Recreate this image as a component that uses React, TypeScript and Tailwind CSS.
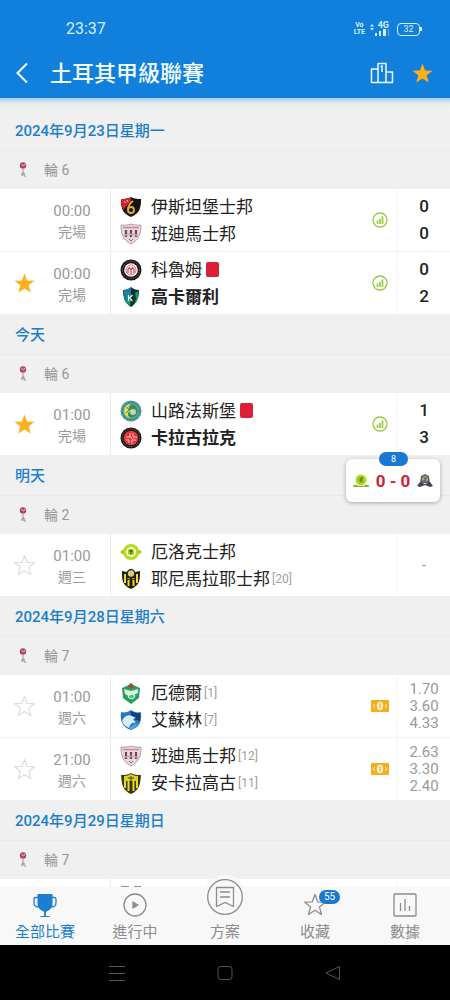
import React from 'react';

type CrestName =
  | 'istanbul'
  | 'bandirma'
  | 'umraniye'
  | 'kocaeli'
  | 'sanliurfa'
  | 'karagumruk'
  | 'erok'
  | 'malatya'
  | 'igdir'
  | 'erzurum'
  | 'ankaragucu'
  | 'next';

interface Team {
  name: string;
  crest: CrestName;
  rank?: number;
  redCard?: boolean;
  winner?: boolean;
}

interface Match {
  time: string;
  status: string;
  star: 'none' | 'on' | 'off';
  teams: Team[];
  icon?: 'chart' | 'cash';
  scores?: string[];
  odds?: string[];
}

interface Day {
  date: string;
  round: string;
  matches: Match[];
}

const days: Day[] = [
  {
    date: '2024年9月23日星期一',
    round: '輪 6',
    matches: [
      {
        time: '00:00',
        status: '完場',
        star: 'none',
        teams: [
          { name: '伊斯坦堡士邦', crest: 'istanbul' },
          { name: '班迪馬士邦', crest: 'bandirma' }
        ],
        icon: 'chart',
        scores: ['0', '0']
      },
      {
        time: '00:00',
        status: '完場',
        star: 'on',
        teams: [
          { name: '科魯姆', crest: 'umraniye', redCard: true },
          { name: '高卡爾利', crest: 'kocaeli', winner: true }
        ],
        icon: 'chart',
        scores: ['0', '2']
      }
    ]
  },
  {
    date: '今天',
    round: '輪 6',
    matches: [
      {
        time: '01:00',
        status: '完場',
        star: 'on',
        teams: [
          { name: '山路法斯堡', crest: 'sanliurfa', redCard: true },
          { name: '卡拉古拉克', crest: 'karagumruk', winner: true }
        ],
        icon: 'chart',
        scores: ['1', '3']
      }
    ]
  },
  {
    date: '明天',
    round: '輪 2',
    matches: [
      {
        time: '01:00',
        status: '週三',
        star: 'off',
        teams: [
          { name: '厄洛克士邦', crest: 'erok' },
          { name: '耶尼馬拉耶士邦', crest: 'malatya', rank: 20 }
        ]
      }
    ]
  },
  {
    date: '2024年9月28日星期六',
    round: '輪 7',
    matches: [
      {
        time: '01:00',
        status: '週六',
        star: 'off',
        teams: [
          { name: '厄德爾', crest: 'igdir', rank: 1 },
          { name: '艾蘇林', crest: 'erzurum', rank: 7 }
        ],
        icon: 'cash',
        odds: ['1.70', '3.60', '4.33']
      },
      {
        time: '21:00',
        status: '週六',
        star: 'off',
        teams: [
          { name: '班迪馬士邦', crest: 'bandirma', rank: 12 },
          { name: '安卡拉高古', crest: 'ankaragucu', rank: 11 }
        ],
        icon: 'cash',
        odds: ['2.63', '3.30', '2.40']
      }
    ]
  },
  {
    date: '2024年9月29日星期日',
    round: '輪 7',
    matches: [
      {
        time: '',
        status: '',
        star: 'none',
        teams: [{ name: '', crest: 'next' }]
      }
    ]
  }
];

const SHIELD = 'M1 3c4 0 8-.5 10-2 2 1.500 6 2 10 2 0 9-1 14-10 18C2 17 1 12 1 3z';

const crestArt: Record<CrestName, React.ReactNode> = {
  istanbul: (
    <>
      <path d={SHIELD} fill="#17130e" />
      <path d="M1 3c4 0 8-.5 10-2v4L3 14C1.500 11 1 7 1 3z" fill="#d3222c" />
      <path d="M4 5l2 2M7 4l1 2" stroke="#f7c6c0" />
      <path d="M13 5c-3 2-5 5-5 9" fill="none" stroke="#d9b43c" strokeWidth="1.800" />
      <circle cx="11" cy="14" r="3" fill="none" stroke="#d9b43c" strokeWidth="1.800" />
    </>
  ),
  bandirma: (
    <>
      <path d="M1 2c4 .5 7 0 10-1 3 1 6 1.500 10 1 0 9-2 15-10 19C3 17 1 11 1 2z" fill="#e3d9de" stroke="#b99aa5" />
      <path d="M3 4.500h16" stroke="#c08d9a" strokeWidth="1.500" />
      <path d="M6 7v7M11 7v7M16 7v7" stroke="#8b3a50" strokeWidth="2.200" />
      <path d="M4 12.500c4-1.500 10-1.500 14 0" stroke="#a9b3c4" strokeWidth="1.500" fill="none" />
      <path d="M9 16l2 2 2-2" stroke="#9c5a6c" fill="none" />
    </>
  ),
  umraniye: (
    <>
      <circle cx="11" cy="11" r="10.500" fill="#1c1719" />
      <circle cx="11" cy="11" r="8.500" fill="none" stroke="#8c8587" strokeDasharray="1 1.500" />
      <circle cx="11" cy="11" r="6.800" fill="#fff" />
      <circle cx="11" cy="11" r="5" fill="none" stroke="#dc6b75" />
      <path d="M8 14v-4l1.500-1.500L11 11l1.500-2.500L14 10v4M11 11v4" stroke="#cf3b49" strokeWidth="1.200" fill="none" />
    </>
  ),
  kocaeli: (
    <>
      <path d="M3 4c3 0 6-1 8-3 2 2 5 3 8 3 0 8-2 13-8 17C5 17 3 12 3 4z" fill="#14322d" />
      <path d="M3.500 4.500C7 4 9 3 11 1v9l-6 5c-1-3-1.500-7-1.500-10.500z" fill="#1b7fa5" />
      <path d="M18.500 5c0 6-1 10-4.500 13l2-5-1-6zM5 15l5 5 1-6-3-1z" fill="#0da463" />
      <path d="M8.500 9v6M12.500 9l-3 3 3 3" stroke="#e8f4f0" strokeWidth="1.300" fill="none" />
    </>
  ),
  sanliurfa: (
    <>
      <circle cx="11" cy="11" r="10.500" fill="#52a0a0" />
      <circle cx="11" cy="11" r="8.800" fill="none" stroke="#2d6c85" strokeDasharray="2 1.500" />
      <circle cx="11" cy="11" r="7" fill="#e2e04d" />
      <path d="M11 4a7 7 0 010 14c-4-2-4-5-1-7-2-3-1-5 1-7z" fill="#3d8e54" />
      <circle cx="13" cy="12" r="3" fill="#c3d3c0" />
      <path d="M7 7l2 3-3 3" stroke="#4875a8" fill="none" />
    </>
  ),
  karagumruk: (
    <>
      <circle cx="11" cy="11" r="10.500" fill="#1a1415" />
      <circle cx="11" cy="11" r="8.800" fill="none" stroke="#918789" strokeDasharray="1 1.500" />
      <circle cx="11" cy="11" r="7.300" fill="#e2373d" />
      <path d="M6 10h4V6M13 6v4h4M6 13h3v3M12 17v-4h4M10 9l3 4" stroke="#f9b9b9" fill="none" />
    </>
  ),
  erok: (
    <>
      <path d="M0 11l4-3h14l4 3-4 3H4z" fill="#a5bf1b" />
      <circle cx="11" cy="11" r="8" fill="#b4dc1d" />
      <circle cx="11" cy="11" r="5" fill="#f6ffd5" />
      <circle cx="11" cy="11" r="3.300" fill="#a5ce28" />
      <path d="M11 9v4M9.500 10h3" stroke="#3c5c22" strokeWidth="1.300" />
    </>
  ),
  malatya: (
    <>
      <path d="M2 3l5 1 4-3 4 3 5-1c0 9 0 14-9 18C2 17 2 12 2 3z" fill="#211c10" />
      <path d="M5 6v9M8.500 10v8M13.500 10v8M17 6v9" stroke="#efdb22" strokeWidth="2" />
      <circle cx="11" cy="5.500" r="3.800" fill="#d8c980" stroke="#2e2818" strokeWidth="1.300" />
      <path d="M7 12l2-1M13 11l2 1" stroke="#211c10" strokeWidth="1.300" />
    </>
  ),
  igdir: (
    <>
      <path d="M2 6l7-3 2-2 2 2 7 3-1 10-8 6-8-6z" fill="#2a9d5c" />
      <path d="M8 4l3-3 3 3-3 3z" fill="#a84a2c" />
      <path d="M4 7l7 2 7-2v4l-8 4-5-3z" fill="#d9f2df" />
      <path d="M8 15c1-3 5-4 7-1-1 3-4 4-7 1z" fill="#56c47e" stroke="#e8fff0" />
    </>
  ),
  erzurum: (
    <>
      <path d="M1 3c4 1 7 0 10-2 3 2 6 3 10 2 1 9-1 15-10 18C2 18 0 12 1 3z" fill="#2577bd" />
      <path d="M11 2c3 2 6 2.500 9 2v8l-9-3z" fill="#153e78" />
      <path d="M2 12c2-5 6-7 10-5l4 2-3 1 3 4c-4-1-6 1-7 5-4-2-6-4-7-7z" fill="#d6ecf8" />
      <path d="M9 19c2-2 5-4 9-5-1 3-4 6-7 7z" fill="#48a8e0" />
    </>
  ),
  ankaragucu: (
    <>
      <path d="M1 3c3 0 7 0 10-2 3 2 7 2 10 2-1 9-1 15-10 19C2 18 2 12 1 3z" fill="#37340f" />
      <path d="M4 4c3 0 5-1 7-2 2 1 4 2 7 2v5H4z" fill="#d8cf27" />
      <path d="M5 8v8M8.500 9v10M13.500 9v10M17 8v8" stroke="#e6db1f" strokeWidth="2" />
      <path d="M8 6h6M11 4v5" stroke="#4b4710" />
    </>
  ),
  next: <path d="M1 2V0h8v4l2 2 3-2V0h7v2l-1 14-9 5-9-5z" fill="#8f8f97" />
};

const Crest: React.FC<{ name: CrestName }> = ({ name }) => (
  <svg viewBox="0 0 22 22" className="h-[22px] w-[22px] shrink-0" aria-hidden="true">
    {crestArt[name]}
  </svg>
);

const STAR = 'M12 1.500l2.700 7.300 7.800.3-6.100 4.800 2.100 7.600L12 17.200l-6.500 4.300 2.100-7.600L1.500 9.100l7.800-.3z';

const StarIcon: React.FC<{ filled?: boolean; className: string }> = ({ filled, className }) => (
  <svg
    viewBox="0 0 24 24"
    className={className}
    fill={filled ? 'currentColor' : 'none'}
    stroke={filled ? 'none' : 'currentColor'}
    strokeWidth="1.300"
    strokeLinejoin="round"
    aria-hidden="true"
  >
    <path d={STAR} />
  </svg>
);

const ChartIcon: React.FC = () => (
  <svg viewBox="0 0 16 16" className="h-4 w-4" fill="none" stroke="#98c93c" aria-hidden="true">
    <circle cx="8" cy="8" r="7" strokeWidth="1.300" />
    <path d="M5.500 8.500v3.500M8 7v5M10.500 4.500V12" strokeWidth="1.700" />
  </svg>
);

const CashIcon: React.FC = () => (
  <svg viewBox="0 0 18 12" className="h-3 w-[18px]" aria-hidden="true">
    <rect width="18" height="12" rx="1" fill="#f5ae1c" />
    <ellipse cx="9" cy="6" rx="3.200" ry="4.200" fill="#fff3d0" />
    <path d="M9 3.500v5" stroke="#f5ae1c" strokeWidth="1.300" />
    <path d="M3.500 4L2.500 6l1 2M14.500 4l1 2-1 2" stroke="#fff3d0" fill="none" />
  </svg>
);

const LeagueLogo: React.FC = () => (
  <svg viewBox="0 0 10 16" className="h-4 w-[10px]" aria-hidden="true">
    <circle cx="5" cy="3.500" r="3.200" fill="#ac4561" />
    <path d="M3.500 2.500l2 1.200L7.500 2" stroke="#f3d9e0" fill="none" />
    <path d="M5 6.500v3" stroke="#d9a0ae" strokeWidth="1.500" />
    <path d="M5 9l-2 3.500h4.500z" fill="#a5a5a5" />
    <path d="M3 13h3.500l1 2" stroke="#8e8e8e" fill="none" />
  </svg>
);

const StatusBar: React.FC = () => (
  <div className="flex h-12 items-center pt-[10px] pr-7 pl-[66px] text-[#d5f1ff]">
    <span className="text-base leading-5">23:37</span>
    <div className="ml-auto flex items-center">
      <span className="flex flex-col text-center text-[7px] leading-[7px] font-bold">
        <span>Vo</span>
        <span>LTE</span>
      </span>
      <span className="ml-1 flex items-center">
        <svg viewBox="0 0 6 14" className="h-[14px] w-[6px]" fill="currentColor" aria-hidden="true">
          <path d="M1 4.500L3 2l2 2.500zM1 6h4L3 8.500z" />
        </svg>
        <span className="flex flex-col items-end">
          <span className="text-[9px] leading-[7px] font-bold">4G</span>
          <svg viewBox="0 0 14 7" className="h-[7px] w-[14px]" fill="currentColor" aria-hidden="true">
            <path d="M0 4h2v3H0zM4 2h2v5H4zM8 0h3v7H8z" />
            <path d="M13 0h1v7h-1z" opacity=".4" />
          </svg>
        </span>
      </span>
      <span className="ml-2 flex h-[13px] w-[23px] items-center justify-center rounded border border-current text-[9px] leading-[9px]">
        32
      </span>
      <span className="h-1 w-[2px] bg-current" />
    </div>
  </div>
);

const Header: React.FC = () => (
  <header className="shrink-0 bg-[#1080dc] text-[#f2fcff]">
    <StatusBar />
    <div className="flex h-[50px] items-center pr-4 pl-4">
      <button type="button" aria-label="返回">
        <svg viewBox="0 0 12 22" className="h-[22px] w-3" fill="none" stroke="currentColor" strokeWidth="2" aria-hidden="true">
          <path d="M11 1.500L1.500 11l9.500 9.500" />
        </svg>
      </button>
      <h1 className="ml-[22px] pt-[2px] text-[22px] leading-7 font-medium">土耳其甲級聯賽</h1>
      <button type="button" aria-label="排名" className="ml-auto">
        <svg viewBox="0 0 24 22" className="h-[22px] w-6" fill="none" stroke="currentColor" strokeWidth="1.500" aria-hidden="true">
          <path d="M8 20.500V1.500h8v19M8 7H1.500v13.500h21V10H16" strokeLinejoin="round" />
          <path d="M10.500 5l1.500-1v6" />
        </svg>
      </button>
      <button type="button" aria-label="收藏聯賽" className="ml-[17px] text-[#fcae14]">
        <StarIcon filled className="h-[23px] w-[23px]" />
      </button>
    </div>
  </header>
);

const TeamLine: React.FC<{ team: Team }> = ({ team }) => (
  <div className="flex h-[27px] items-center">
    <Crest name={team.crest} />
    <span className={`ml-[9px] pt-[2px] text-[17px] text-[#222] ${team.winner ? 'font-bold' : 'font-normal'}`}>
      {team.name}
    </span>
    {team.redCard && <span className="ml-1 h-[15px] w-[13px] rounded-[2px] bg-[#dd1f35]" />}
    {team.rank && <span className="ml-[2px] text-xs text-[#a0a0a0]">[{team.rank}]</span>}
  </div>
);

const MatchRow: React.FC<{ match: Match }> = ({ match }) => (
  <li className="flex min-h-[62px] border-b border-[#f0f0f0] bg-white last:border-b-0">
    <div className="flex w-12 items-center justify-center">
      {match.star !== 'none' && (
        <button type="button" aria-label="收藏" className={match.star === 'on' ? 'text-[#fbb01c]' : 'text-[#dedede]'}>
          <StarIcon filled={match.star === 'on'} className="h-[23px] w-[23px]" />
        </button>
      )}
    </div>
    <div className="mr-[14px] flex w-12 flex-col items-center justify-center pt-[3px] text-[#999]">
      <span className="text-[15px] leading-[21px]">{match.time}</span>
      <span className="text-sm leading-[21px]">{match.status}</span>
    </div>
    <div className="flex-1 border-l border-[#ededed] py-1 pl-[9px]">
      {match.teams.map((team) => (
        <TeamLine key={team.crest} team={team} />
      ))}
    </div>
    <div className="flex w-[34px] items-center justify-center">
      {match.icon === 'chart' && <ChartIcon />}
      {match.icon === 'cash' && <CashIcon />}
    </div>
    <div className="flex w-[53px] flex-col items-center justify-center border-l border-[#f5f5f5]">
      {match.scores?.map((score, i) => (
        <span key={i} className="text-[17px] leading-[27px] font-medium text-[#222]">
          {score}
        </span>
      ))}
      {match.odds?.map((odd) => (
        <span key={odd} className="text-[15px] leading-[17px] text-[#999]">
          {odd}
        </span>
      ))}
      {!match.scores && !match.odds && match.time && <span className="text-sm text-[#999]">-</span>}
    </div>
  </li>
);

const DaySection: React.FC<{ day: Day }> = ({ day }) => (
  <section>
    <h2 className="flex h-[41px] items-center border-b border-[#e9e9e9] pt-[2px] pl-[15px] text-[15px] font-medium text-[#1c7ecb]">
      {day.date}
    </h2>
    <div className="flex h-[38px] items-center pl-[18px] text-sm text-[#999]">
      <LeagueLogo />
      <span className="ml-4">{day.round}</span>
    </div>
    <ul>
      {day.matches.map((match, i) => (
        <MatchRow key={i} match={match} />
      ))}
    </ul>
  </section>
);

const LiveCard: React.FC = () => (
  <button
    type="button"
    className="absolute top-[361px] right-[10px] flex h-[43px] w-[94px] items-center justify-between rounded-md bg-white px-[7px] shadow-[0_1px_4px_rgba(0,0,0,0.3)]"
  >
    <span className="absolute -top-[7px] left-[33px] h-[14px] w-[29px] rounded-full bg-[#1779d2] text-center text-[9px] leading-[14px] text-white">
      8
    </span>
    <svg viewBox="0 0 16 14" className="h-[14px] w-4" aria-hidden="true">
      <circle cx="8" cy="6" r="5.500" fill="#b2d91f" />
      <circle cx="8" cy="6" r="3" fill="#8ebd20" />
      <path d="M8 4v4M8 4h2" stroke="#365516" />
      <path d="M0 12c3-2 4-1 5 0h6c1-1 2-2 5 0v1H0z" fill="#90ac37" />
    </svg>
    <span className="text-[17px] leading-5 font-bold text-[#cf2036]">0 - 0</span>
    <svg viewBox="0 0 16 14" className="h-[14px] w-4" aria-hidden="true">
      <path d="M3 9L4 2l4-2 4 2 1 7z" fill="#5d6158" />
      <circle cx="8" cy="5" r="3" fill="#a9aa8d" />
      <path d="M6.500 4h3l-3 3h3" stroke="#444950" fill="none" />
      <path d="M0 12l3-4 5 2 5-2 3 4-3 1-5-2-5 2z" fill="#3d4358" />
    </svg>
  </button>
);

const NavItem: React.FC<{ label: string; active?: boolean; badge?: string; children: React.ReactNode }> = ({
  label,
  active,
  badge,
  children
}) => (
  <button
    type="button"
    className={`relative flex flex-1 flex-col items-center pt-[6px] text-[15px] ${active ? 'text-[#1a7fd0]' : 'text-[#8c8c8c]'}`}
  >
    <svg
      viewBox="0 0 24 24"
      className="h-6 w-6"
      fill="none"
      stroke="currentColor"
      strokeWidth="1.300"
      strokeLinejoin="round"
      aria-hidden="true"
    >
      {children}
    </svg>
    {badge && (
      <span className="absolute top-[3px] left-1/2 ml-1 h-[14px] w-[21px] rounded-full bg-[#1779d2] text-center text-[10px] leading-[14px] text-white">
        {badge}
      </span>
    )}
    <span className="mt-[5px] leading-5">{label}</span>
  </button>
);

const BottomNav: React.FC = () => (
  <nav className="relative flex h-[58px] shrink-0 bg-[#f8f8f8]">
    <NavItem label="全部比賽" active>
      <path d="M4.500 1h15v10c0 3.500-3 7-7.500 8-4.500-1-7.500-4.500-7.500-8z" fill="currentColor" stroke="none" />
      <path d="M5 4.500H2.500Q1 4.500 1 6.500v3c0 3 1.500 4.500 4.500 4.500M19 4.500h2.500q1.500 0 1.500 2v3c0 3-1.500 4.500-4.500 4.500" />
      <path d="M12 18v6M7.500 24h9" strokeWidth="1.800" />
    </NavItem>
    <NavItem label="進行中">
      <circle cx="12" cy="12" r="11" />
      <path d="M10 9l5 3-5 3z" fill="currentColor" />
    </NavItem>
    <button type="button" className="relative flex flex-1 flex-col items-center pt-[35px] text-[15px] text-[#8c8c8c]">
      <span className="absolute -top-3 rounded-full bg-[#f8f8f8] p-1">
        <svg viewBox="0 0 36 36" className="h-9 w-9" fill="none" stroke="currentColor" strokeWidth="1.300" aria-hidden="true">
          <circle cx="18" cy="18" r="17.300" />
          <path d="M9.500 8.500h17v19l-8.500-4-8.500 4z" />
          <path d="M13 13h10M13 18h10" />
        </svg>
      </span>
      <span className="leading-5">方案</span>
    </button>
    <NavItem label="收藏" badge="55">
      <path d={STAR} />
    </NavItem>
    <NavItem label="數據">
      <rect x="1" y="1" width="22" height="22" rx="1" />
      <path d="M7.500 10v8M12 6v12M16.500 13v5" />
    </NavItem>
  </nav>
);

const SystemBar: React.FC = () => (
  <div className="flex h-[55px] shrink-0 items-center justify-center gap-[92px] bg-black text-[#555]">
    <button type="button" aria-label="選單">
      <svg viewBox="0 0 16 16" className="h-4 w-4" stroke="currentColor" aria-hidden="true">
        <path d="M0 1.500h16M0 8.500h16M0 15.500h16" />
      </svg>
    </button>
    <button type="button" aria-label="主畫面">
      <svg viewBox="0 0 16 16" className="h-4 w-4" fill="none" stroke="currentColor" aria-hidden="true">
        <rect x="1" y="1.500" width="14" height="13" rx="3" />
      </svg>
    </button>
    <button type="button" aria-label="上一頁">
      <svg viewBox="0 0 16 16" className="h-4 w-4" fill="none" stroke="currentColor" strokeLinejoin="round" aria-hidden="true">
        <path d="M14.500 1.500v13L1 8z" />
      </svg>
    </button>
  </div>
);

export default function App() {
  return (
    <div className="flex h-screen flex-col bg-[#f0f0f0] font-['Roboto','Noto_Sans_CJK_TC',sans-serif]">
      <Header />
      <div className="relative flex min-h-0 flex-1 flex-col">
        <div className="h-3 shrink-0 bg-linear-to-b from-[#a6cdf0] via-[#e9eef3] via-50% to-[#f0f0f0]" />
        <main className="min-h-0 flex-1 overflow-hidden">
          {days.map((day) => (
            <DaySection key={day.date} day={day} />
          ))}
        </main>
        <LiveCard />
      </div>
      <BottomNav />
      <SystemBar />
    </div>
  );
}
